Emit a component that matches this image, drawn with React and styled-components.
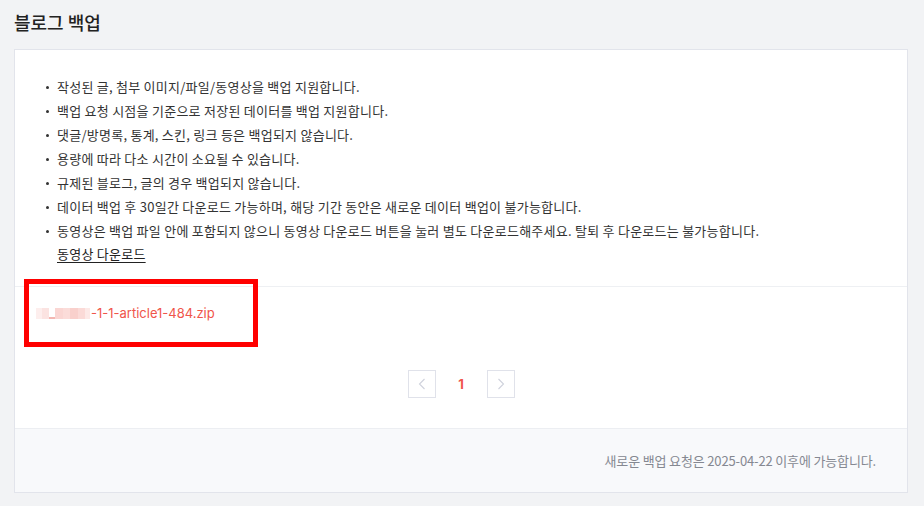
import React from "react";
import styled, { createGlobalStyle } from "styled-components";

const GlobalStyle = createGlobalStyle`
  html, body { margin: 0; padding: 0; background: #f2f3f5; }
  body { font-family: "Noto Sans CJK KR", "Noto Sans", sans-serif; color: #333; }
  * { box-sizing: border-box; }
`;

const Page = styled.div`
  padding: 0 16px 14px 14px;
`;

const Title = styled.h2`
  margin: 0;
  height: 49px;
  padding-top: 10px;
  font-size: 18px;
  line-height: 24px;
  font-weight: 500;
  color: #222;
`;

const Card = styled.section`
  background: #fff;
  border: 1px solid #e2e4eb;
`;

const Notice = styled.ul`
  margin: 0;
  padding: 25px 0 21px 30px;
  list-style: none;
  border-bottom: 1px solid #eef0f3;
`;

const Item = styled.li`
  position: relative;
  padding-left: 12px;
  font-size: 13px;
  letter-spacing: 0.25px;
  line-height: 24px;
  color: #333;
  &::before {
    content: "";
    position: absolute;
    left: 1px;
    top: 11px;
    width: 3px;
    height: 3px;
    border-radius: 50%;
    background: #333;
  }
`;

const Plain = styled.div`
  font-size: 13px;
  letter-spacing: 0.25px;
  line-height: 22px;
  padding-left: 12px;
`;

const VideoLink = styled.a`
  color: #222;
  text-decoration: underline;
  text-underline-offset: 3px;
  cursor: pointer;
`;

const FileRow = styled.div`
  position: relative;
  height: 52px;
  display: flex;
  align-items: center;
  padding-left: 21px;
`;

const FileLink = styled.a`
  display: inline-flex;
  align-items: center;
  font-family: Inter, "Noto Sans CJK KR", sans-serif;
  font-size: 13px;
  color: #f0554a;
  text-decoration: none;
  cursor: pointer;
`;

const Blur = styled.span`
  display: inline-flex;
  align-items: flex-end;
  height: 11px;
  margin-right: 1px;
`;

const BlurBlock = styled.span`
  display: inline-block;
  width: ${(p) => p.$w}px;
  height: ${(p) => p.$h || 11}px;
  background: ${(p) => p.$c};
`;

const Highlight = styled.div`
  position: absolute;
  left: 9px;
  top: -8px;
  width: 234px;
  height: 68px;
  border: 5px solid #ff0000;
  pointer-events: none;
`;

const Pager = styled.nav`
  display: flex;
  justify-content: center;
  align-items: center;
  padding: 31px 0 30px;
`;

const PageArrow = styled.button`
  width: 28px;
  height: 28px;
  border: 1px solid #e0e2ea;
  background: #fff;
  display: flex;
  align-items: center;
  justify-content: center;
  padding: 0;
  cursor: default;
`;

const PageNum = styled.span`
  width: 51px;
  text-align: center;
  font-size: 13px;
  font-weight: 700;
  color: #f0554a;
  font-family: Inter, "Noto Sans CJK KR", sans-serif;
`;

const Footer = styled.footer`
  height: 64px;
  border-top: 1px solid #eceef2;
  background: #f8f9fb;
  display: flex;
  align-items: center;
  justify-content: flex-end;
  padding-right: 31px;
  font-size: 13px;
  letter-spacing: -0.15px;
  color: #858891;
`;

const Chevron = ({ dir }) => (
  <svg width="8" height="12" viewBox="0 0 8 12" fill="none">
    <polyline
      points={dir === "left" ? "6.5,1 1.5,6 6.5,11" : "1.5,1 6.5,6 1.5,11"}
      stroke="#cfd2dc"
      strokeWidth="1.1"
    />
  </svg>
);

const notices = [
  "작성된 글, 첨부 이미지/파일/동영상을 백업 지원합니다.",
  "백업 요청 시점을 기준으로 저장된 데이터를 백업 지원합니다.",
  "댓글/방명록, 통계, 스킨, 링크 등은 백업되지 않습니다.",
  "용량에 따라 다소 시간이 소요될 수 있습니다.",
  "규제된 블로그, 글의 경우 백업되지 않습니다.",
  "데이터 백업 후 30일간 다운로드 가능하며, 해당 기간 동안은 새로운 데이터 백업이 불가능합니다.",
];

const blurBlocks = [
  { w: 6, c: "#fdeeed" },
  { w: 7, c: "#fbe3e1", h: 11 },
  { w: 6, c: "#f3b7b2", h: 2 },
  { w: 8, c: "#fad6d3" },
  { w: 7, c: "#fbdcd9" },
  { w: 8, c: "#f9d0cc" },
  { w: 7, c: "#fbdad7" },
  { w: 5, c: "#fde9e7" },
];

export default function App() {
  return (
    <Page>
      <GlobalStyle />
      <Title>블로그 백업</Title>
      <Card>
        <Notice>
          {notices.map((t) => (
            <Item key={t}>{t}</Item>
          ))}
          <Item>
            동영상은 백업 파일 안에 포함되지 않으니 동영상 다운로드 버튼을 눌러 별도 다운로드해주세요. 탈퇴 후 다운로드는 불가능합니다.
          </Item>
          <Plain>
            <VideoLink>동영상 다운로드</VideoLink>
          </Plain>
        </Notice>
        <FileRow>
          <FileLink>
            <Blur>
              {blurBlocks.map((b, i) => (
                <BlurBlock key={i} $w={b.w} $c={b.c} $h={b.h} />
              ))}
            </Blur>
            -1-1-article1-484.zip
          </FileLink>
          <Highlight />
        </FileRow>
        <Pager>
          <PageArrow aria-label="이전">
            <Chevron dir="left" />
          </PageArrow>
          <PageNum>1</PageNum>
          <PageArrow aria-label="다음">
            <Chevron dir="right" />
          </PageArrow>
        </Pager>
        <Footer>새로운 백업 요청은 2025-04-22 이후에 가능합니다.</Footer>
      </Card>
    </Page>
  );
}
